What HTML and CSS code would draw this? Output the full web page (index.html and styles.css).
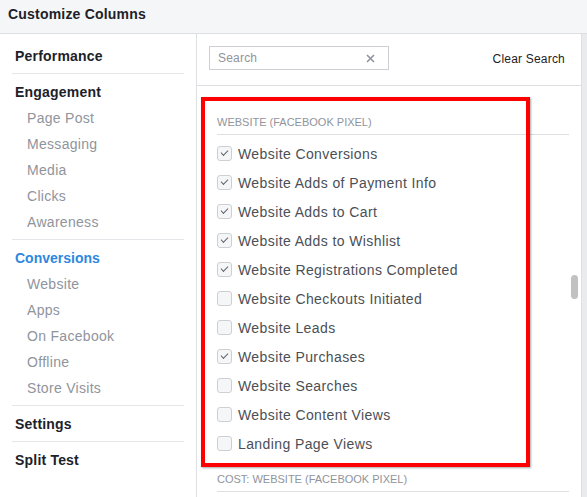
FILE: index.html
```html
<!DOCTYPE html>
<html>
<head>
<meta charset="utf-8">
<link rel="stylesheet" href="styles.css">
</head>
<body>
<div class="header">Customize Columns</div>
<div class="layout">
  <nav class="sidebar">
    <div class="section"><div class="title">Performance</div></div>
    <div class="section">
      <div class="title">Engagement</div>
      <div class="sub">Page Post</div>
      <div class="sub">Messaging</div>
      <div class="sub">Media</div>
      <div class="sub">Clicks</div>
      <div class="sub">Awareness</div>
    </div>
    <div class="section">
      <div class="title active">Conversions</div>
      <div class="sub">Website</div>
      <div class="sub">Apps</div>
      <div class="sub">On Facebook</div>
      <div class="sub">Offline</div>
      <div class="sub">Store Visits</div>
    </div>
    <div class="section"><div class="title">Settings</div></div>
    <div class="section last"><div class="title">Split Test</div></div>
  </nav>
  <main class="main">
    <div class="searchbar">
      <div class="search">
        <span class="placeholder">Search</span>
        <svg class="clear-x" width="9" height="9" viewBox="0 0 9 9"><path d="M1 1L8 8M8 1L1 8" stroke="#8d949e" stroke-width="1.6" fill="none"/></svg>
      </div>
      <span class="clear-link">Clear Search</span>
    </div>
    <div class="content">
      <div class="group-title">WEBSITE (FACEBOOK PIXEL)</div>
      <div class="rows">
        <div class="row"><span class="cb on"></span>Website Conversions</div>
        <div class="row"><span class="cb on"></span>Website Adds of Payment Info</div>
        <div class="row"><span class="cb on"></span>Website Adds to Cart</div>
        <div class="row"><span class="cb on"></span>Website Adds to Wishlist</div>
        <div class="row"><span class="cb on"></span>Website Registrations Completed</div>
        <div class="row"><span class="cb"></span>Website Checkouts Initiated</div>
        <div class="row"><span class="cb"></span>Website Leads</div>
        <div class="row"><span class="cb on"></span>Website Purchases</div>
        <div class="row"><span class="cb"></span>Website Searches</div>
        <div class="row"><span class="cb"></span>Website Content Views</div>
        <div class="row"><span class="cb"></span>Landing Page Views</div>
      </div>
      <div class="group-title">COST: WEBSITE (FACEBOOK PIXEL)</div>
    </div>
    <div class="thumb"></div>
  </main>
  <div class="track"></div>
</div>
<div class="highlight"></div>
</body>
</html>
```
FILE: styles.css
```css
html, body {
  margin: 0;
  padding: 0;
  height: 100%;
  overflow: hidden;
  background: #fff;
  font-family: "Liberation Sans", Arial, sans-serif;
}
.header {
  height: 33px;
  background: #f5f6f7;
  border-bottom: 1px solid #dddfe2;
  box-sizing: content-box;
  padding-left: 8px;
  line-height: 29px;
  font-size: 14px;
  font-weight: bold;
  color: #1d2129;
  letter-spacing: 0.2px;
}
.layout {
  display: flex;
  height: 463px;
}
.sidebar {
  width: 196px;
  border-right: 1px solid #dddfe2;
  padding-top: 4px;
  box-sizing: content-box;
  flex: none;
}
.section {
  margin: 0 12px;
  padding: 5px 0 4px;
  border-bottom: 1px solid #e5e6e9;
}
.section.last { border-bottom: none; }
.title {
  line-height: 26px;
  font-size: 14px;
  font-weight: bold;
  color: #1d2129;
  padding-left: 3px;
  letter-spacing: 0.2px;
}
.title.active { color: #2d88de; letter-spacing: 0; }
.sub {
  line-height: 26px;
  font-size: 14px;
  color: #90949c;
  padding-left: 15px;
  letter-spacing: 0.3px;
}
.main {
  flex: 1;
  position: relative;
}
.searchbar {
  height: 52px;
  border-bottom: 1px solid #dddfe2;
  display: flex;
  align-items: flex-start;
  justify-content: space-between;
  padding: 12px 16px 0 12px;
  box-sizing: border-box;
}
.search {
  width: 180px;
  height: 24px;
  border: 1px solid #ccd0d5;
  box-sizing: border-box;
  display: flex;
  align-items: center;
  justify-content: space-between;
  padding: 0 13px 0 8px;
}
.placeholder {
  font-size: 12px;
  color: #90949c;
  letter-spacing: 0.2px;
}
.clear-link {
  font-size: 12px;
  color: #1d2129;
  margin-top: 6px;
  letter-spacing: 0.2px;
}
.content {
  padding: 25px 12px 0 20px;
}
.group-title {
  font-size: 11px;
  color: #90949c;
  line-height: 23px;
  border-bottom: 1px solid #dddfe2;
}
.rows {
  padding: 4px 0 10px;
}
.row {
  height: 29px;
  display: flex;
  align-items: center;
  font-size: 14px;
  color: #4b4f56;
  letter-spacing: 0.4px;
}
.cb {
  width: 13px;
  height: 13px;
  border: 1px solid #ccd0d5;
  border-radius: 3px;
  background: #f5f6f7;
  margin-right: 6px;
  position: relative;
  flex: none;
}
.cb.on::after {
  content: "";
  position: absolute;
  left: 3px;
  top: 3px;
  width: 6px;
  height: 3px;
  border-left: 1.5px solid #606770;
  border-bottom: 1.5px solid #606770;
  transform: rotate(-45deg);
  transform-origin: center;
}
.thumb {
  position: absolute;
  left: 374px;
  top: 241px;
  width: 7px;
  height: 24px;
  border-radius: 4px;
  background: #c1c1c1;
}
.track {
  width: 5px;
  flex: none;
  background: #e9ebee;
  border-left: 1px solid #dddfe2;
}
.highlight {
  position: absolute;
  left: 201px;
  top: 97px;
  width: 329px;
  height: 370px;
  box-sizing: border-box;
  border: 4px solid #ff0000;
  box-shadow: 1px 1px 2px rgba(0,0,0,0.35);
}
```
